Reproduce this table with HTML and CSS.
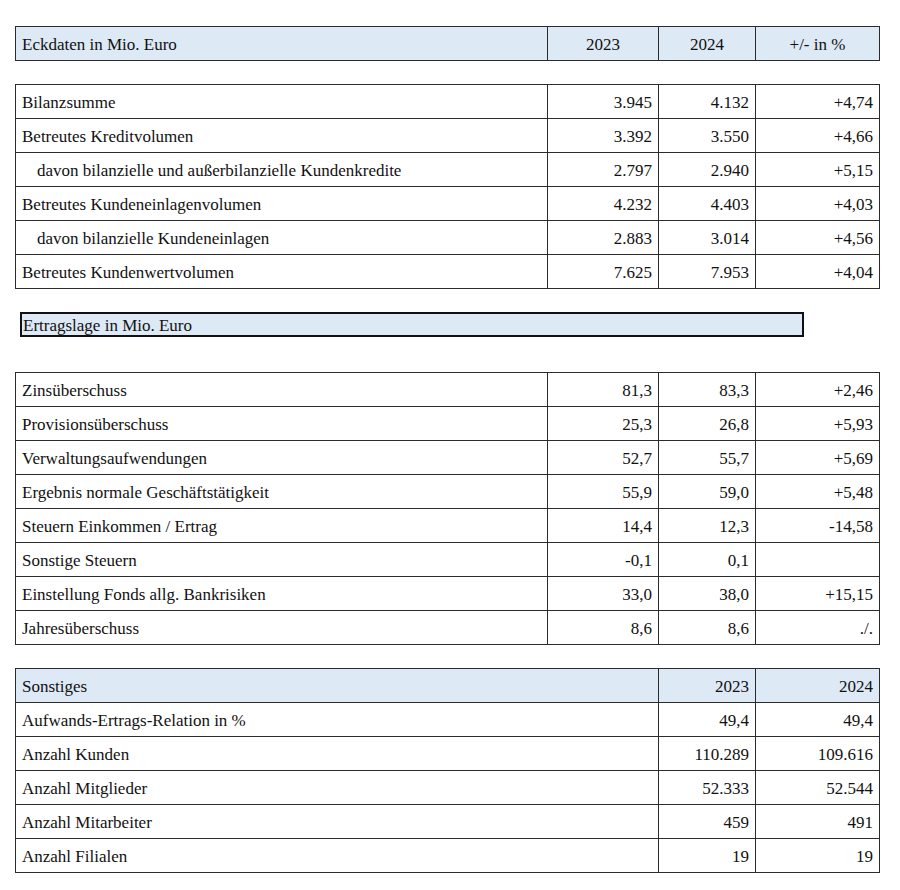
FILE: index.html
```html
<!DOCTYPE html>
<html lang="de">
<head>
<meta charset="utf-8">
<title>Eckdaten</title>
<link rel="stylesheet" href="styles.css">
</head>
<body>
<div class="page">
  <table class="grid t4col">
    <colgroup><col class="c-label"><col class="c-a"><col class="c-b"><col class="c-c"></colgroup>
    <tr class="head"><td>Eckdaten in Mio. Euro</td><td class="ctr">2023</td><td class="ctr">2024</td><td class="ctr">+/- in %</td></tr>
  </table>

  <table class="grid t4col">
    <colgroup><col class="c-label"><col class="c-a"><col class="c-b"><col class="c-c"></colgroup>
    <tr><td>Bilanzsumme</td><td class="num">3.945</td><td class="num">4.132</td><td class="num">+4,74</td></tr>
    <tr><td>Betreutes Kreditvolumen</td><td class="num">3.392</td><td class="num">3.550</td><td class="num">+4,66</td></tr>
    <tr><td class="indent">davon bilanzielle und außerbilanzielle Kundenkredite</td><td class="num">2.797</td><td class="num">2.940</td><td class="num">+5,15</td></tr>
    <tr><td>Betreutes Kundeneinlagenvolumen</td><td class="num">4.232</td><td class="num">4.403</td><td class="num">+4,03</td></tr>
    <tr><td class="indent">davon bilanzielle Kundeneinlagen</td><td class="num">2.883</td><td class="num">3.014</td><td class="num">+4,56</td></tr>
    <tr><td>Betreutes Kundenwertvolumen</td><td class="num">7.625</td><td class="num">7.953</td><td class="num">+4,04</td></tr>
  </table>

  <div class="section-box">Ertragslage in Mio. Euro</div>

  <table class="grid t4col">
    <colgroup><col class="c-label"><col class="c-a"><col class="c-b"><col class="c-c"></colgroup>
    <tr><td>Zinsüberschuss</td><td class="num">81,3</td><td class="num">83,3</td><td class="num">+2,46</td></tr>
    <tr><td>Provisionsüberschuss</td><td class="num">25,3</td><td class="num">26,8</td><td class="num">+5,93</td></tr>
    <tr><td>Verwaltungsaufwendungen</td><td class="num">52,7</td><td class="num">55,7</td><td class="num">+5,69</td></tr>
    <tr><td>Ergebnis normale Geschäftstätigkeit</td><td class="num">55,9</td><td class="num">59,0</td><td class="num">+5,48</td></tr>
    <tr><td>Steuern Einkommen / Ertrag</td><td class="num">14,4</td><td class="num">12,3</td><td class="num">-14,58</td></tr>
    <tr><td>Sonstige Steuern</td><td class="num">-0,1</td><td class="num">0,1</td><td class="num"></td></tr>
    <tr><td>Einstellung Fonds allg. Bankrisiken</td><td class="num">33,0</td><td class="num">38,0</td><td class="num">+15,15</td></tr>
    <tr><td>Jahresüberschuss</td><td class="num">8,6</td><td class="num">8,6</td><td class="num">./.</td></tr>
  </table>

  <table class="grid t3col">
    <colgroup><col class="c-label2"><col class="c-b"><col class="c-c"></colgroup>
    <tr class="head"><td class="nosep">Sonstiges</td><td class="num nosep">2023</td><td class="num">2024</td></tr>
    <tr><td>Aufwands-Ertrags-Relation in %</td><td class="num">49,4</td><td class="num">49,4</td></tr>
    <tr><td>Anzahl Kunden</td><td class="num">110.289</td><td class="num">109.616</td></tr>
    <tr><td>Anzahl Mitglieder</td><td class="num">52.333</td><td class="num">52.544</td></tr>
    <tr><td>Anzahl Mitarbeiter</td><td class="num">459</td><td class="num">491</td></tr>
    <tr><td>Anzahl Filialen</td><td class="num">19</td><td class="num">19</td></tr>
  </table>
</div>
</body>
</html>
```

FILE: styles.css
```css
html, body {
  margin: 0;
  padding: 0;
  background: #ffffff;
}
body {
  font-family: "Liberation Serif", "Times New Roman", serif;
  font-size: 17px;
  color: #111111;
}
.page {
  padding: 26px 0 0 15px;
  width: 864px;
  display: flex;
  flex-direction: column;
}
.grid {
  width: 864px;
  border-collapse: collapse;
  table-layout: fixed;
  margin-bottom: 23px;
}
.grid td {
  border: 1px solid #2b2b2b;
  height: 31px;
  padding: 2px 6px 0;
  line-height: 20px;
  white-space: nowrap;
  vertical-align: middle;
}
.c-label { width: 532px; }
.c-a { width: 111px; }
.c-b { width: 97px; }
.c-c { width: 124px; }
.c-label2 { width: 643px; }
.grid .head td {
  background: #dde9f5;
}
.grid td.ctr { text-align: center; }
.grid td.num { text-align: right; }
.grid td.indent { padding-left: 21px; }
.grid .head td.nosep { border-right: none; }
.section-box {
  margin-left: 5px;
  width: 779px;
  height: 21px;
  border: 2px solid #111111;
  background: #dde9f5;
  line-height: 23px;
  padding-left: 1px;
  margin-bottom: 35px;
}
```
